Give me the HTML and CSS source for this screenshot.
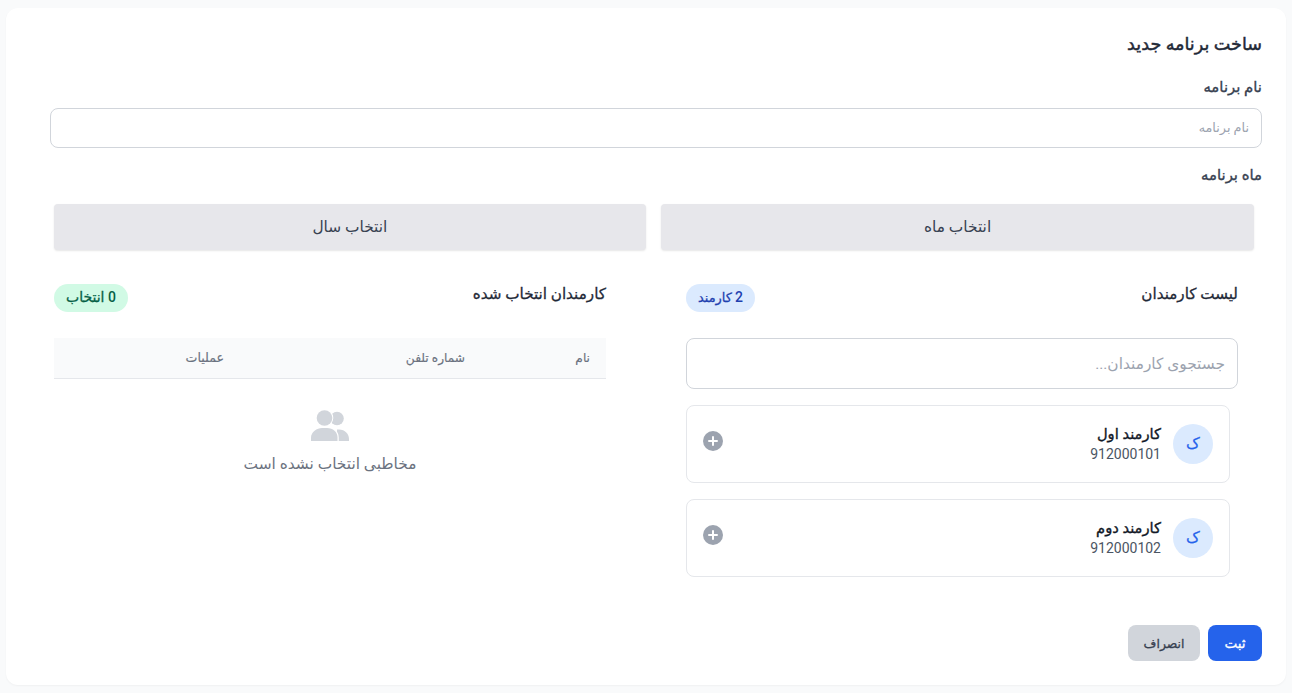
FILE: index.html
```html
<!DOCTYPE html>
<html lang="fa" dir="rtl">
<head>
<meta charset="utf-8">
<title>ساخت برنامه جدید</title>
<link rel="stylesheet" href="styles.css">
</head>
<body>
<main class="card">
  <h1 class="title">ساخت برنامه جدید</h1>
  <label class="label label-name" for="name">نام برنامه</label>
  <input class="name-input" id="name" type="text" placeholder="نام برنامه">
  <div class="label label-month">ماه برنامه</div>
  <div class="pickers">
    <button class="picker" type="button">انتخاب ماه</button>
    <button class="picker" type="button">انتخاب سال</button>
  </div>
  <div class="panels">
    <section class="panel panel-list">
      <div class="panel-head">
        <h2 class="panel-title">لیست کارمندان</h2>
        <span class="badge badge-blue"><span class="num">2</span> کارمند</span>
      </div>
      <input class="search" type="text" placeholder="جستجوی کارمندان...">
      <div class="employee">
        <div class="avatar">ک</div>
        <div class="emp-info">
          <div class="emp-name">کارمند اول</div>
          <div class="emp-phone">912000101</div>
        </div>
        <svg class="add" viewBox="0 0 20 20" width="20" height="20"><circle cx="10" cy="10" r="10" fill="#9ca3af"/><path d="M10 6v8M6 10h8" stroke="#fff" stroke-width="2" stroke-linecap="round"/></svg>
      </div>
      <div class="employee">
        <div class="avatar">ک</div>
        <div class="emp-info">
          <div class="emp-name">کارمند دوم</div>
          <div class="emp-phone">912000102</div>
        </div>
        <svg class="add" viewBox="0 0 20 20" width="20" height="20"><circle cx="10" cy="10" r="10" fill="#9ca3af"/><path d="M10 6v8M6 10h8" stroke="#fff" stroke-width="2" stroke-linecap="round"/></svg>
      </div>
    </section>
    <section class="panel panel-selected">
      <div class="panel-head">
        <h2 class="panel-title">کارمندان انتخاب شده</h2>
        <span class="badge badge-green"><span class="num">0</span> انتخاب</span>
      </div>
      <div class="table-head">
        <span class="col col-name">نام</span>
        <span class="col col-phone">شماره تلفن</span>
        <span class="col col-ops">عملیات</span>
      </div>
      <div class="empty">
        <svg class="empty-icon" viewBox="0 0 38 32" width="38" height="32">
          <circle cx="26" cy="8.500" r="6.800" fill="#d1d5db"/>
          <path d="M26 19.500h2c6 0 10 4.500 10 9.500v2H26z" fill="#d1d5db"/>
          <circle cx="13.500" cy="8" r="7.800" fill="#d1d5db" stroke="#fff" stroke-width="2" paint-order="stroke"/>
          <path d="M0 31v-3.500C0 22 6 18 11 18h5c6 0 10.500 4 10.500 9.500V31z" fill="#d1d5db" stroke="#fff" stroke-width="2.500" paint-order="stroke"/>
        </svg>
        <p class="empty-text">مخاطبی انتخاب نشده است</p>
      </div>
    </section>
  </div>
  <div class="actions">
    <button class="btn btn-primary" type="button">ثبت</button>
    <button class="btn btn-muted" type="button">انصراف</button>
  </div>
</main>
</body>
</html>
```

FILE: styles.css
```css
* { box-sizing: border-box; }
html, body { height: 100%; }
body {
  margin: 0;
  padding: 8px 6px;
  background: #f9fafb;
  font-family: Roboto, "DejaVu Sans", sans-serif;
  color: #111827;
  overflow: hidden;
}
.card {
  height: 677px;
  background: #fff;
  border-radius: 12px;
  box-shadow: 0 1px 2px rgba(0,0,0,.04);
  padding: 24px 24px 24px 44px;
  display: flex;
  flex-direction: column;
}
.title { margin: 0; font-size: 17.6px; line-height: 24px; font-weight: 400; -webkit-text-stroke: .45px #1f2937; color: #1f2937; }
.label { font-size: 14.9px; line-height: 20px; font-weight: 400; -webkit-text-stroke: .35px #374151; color: #374151; }
.label-name { margin-top: 21px; }
.name-input {
  margin-top: 11px;
  height: 40px;
  border: 1px solid #d1d5db;
  border-radius: 8px;
  padding: 0 12px 2px;
  font: inherit;
  font-size: 12.8px;
  outline: none;
}
.name-input::placeholder, .search::placeholder { color: #9ca3af; opacity: 1; }
.label-month { margin-top: 17px; }
.pickers { display: flex; gap: 15px; margin: 19px 8px 0 3.5px; }
.picker {
  flex: 1;
  height: 46px;
  border: 0;
  border-radius: 4px;
  background: #e7e7eb;
  box-shadow: 0 1px 2px rgba(0,0,0,.1);
  font: inherit;
  font-size: 15.4px;
  color: #374151;
}
.panels { display: flex; gap: 80px; margin: 22px 24px 0 4px; }
.panel { flex: 1; }
.panel-title { margin: 0; font-size: 15.2px; line-height: 20px; font-weight: 400; -webkit-text-stroke: .3px #1f2937; color: #1f2937; }
.panel-head { display: flex; justify-content: space-between; align-items: flex-start; height: 28px; margin-top: 12px; }
.badge {
  height: 28px;
  border-radius: 14px;
  padding: 0 12px;
  line-height: 26px;
  font-weight: 400;
  -webkit-text-stroke: .3px currentColor;
}
.num { font-size: 14px; font-weight: 500; -webkit-text-stroke: 0; }
.badge-blue { background: #dbeafe; color: #1e40af; font-size: 12.9px; }
.badge-green { background: #d1fae5; color: #065f46; font-size: 14px; }
.search {
  display: block;
  width: 100%;
  margin-top: 26px;
  height: 51px;
  border: 1px solid #d1d5db;
  border-radius: 8px;
  padding: 0 12px;
  font: inherit;
  font-size: 15.4px;
  outline: none;
}
.employee {
  display: flex;
  align-items: flex-start;
  height: 78px;
  margin: 16px 0 0;
  margin-right: 8px;
  padding: 18px 16px;
  border: 1px solid #e5e7eb;
  border-radius: 8px;
}
.avatar {
  width: 40px;
  height: 40px;
  border-radius: 50%;
  background: #dbeafe;
  color: #2563eb;
  text-align: center;
  line-height: 40px;
  font-size: 15.4px;
  -webkit-text-stroke: .25px #2563eb;
  flex: none;
}
.emp-info { margin-right: 12px; flex: 1; }
.emp-name { font-size: 14.7px; line-height: 20px; font-weight: 400; -webkit-text-stroke: .35px #111827; color: #111827; }
.emp-phone { font-size: 14px; line-height: 20px; color: #4b5563; }
.add { flex: none; margin-top: 7px; }
.table-head {
  display: flex;
  margin-top: 26px;
  height: 41px;
  background: #f9fafb;
  border-bottom: 1px solid #e5e7eb;
  font-size: 12.2px;
  line-height: 40px;
  color: #6b7280;
  -webkit-text-stroke: .15px #6b7280;
}
.col-name { margin-right: 16px; width: 125px; flex: none; }
.col-phone { width: 241px; flex: none; }
.col-ops { font-size: 12.6px; }
.empty { text-align: center; padding-top: 31px; }
.empty-icon { display: block; margin: 0 auto; }
.empty-text { margin: 12px 0 0; font-size: 15.4px; line-height: 20px; color: #6b7280; }
.actions { margin-top: auto; display: flex; gap: 8px; }
.btn { height: 36px; border: 0; border-radius: 8px; font: inherit; font-size: 12.4px; -webkit-text-stroke: .3px currentColor; }
.btn-primary { width: 54px; background: #2563eb; color: #fff; font-size: 13.6px; }
.btn-muted { width: 72px; background: #d1d5db; color: #374151; }
```
